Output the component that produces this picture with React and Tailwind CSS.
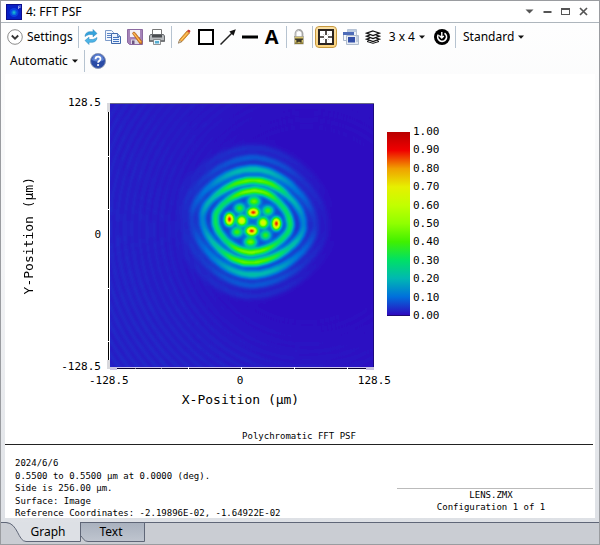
import React, { useState } from "react";

const SCALE = ["1.00", "0.90", "0.80", "0.70", "0.60", "0.50", "0.40", "0.30", "0.20", "0.10", "0.00"];

// rounded diamond through its top, right, bottom and left points
function ringPath([tx, ty], [rx, ry], [bx, by], [lx, ly]) {
  const k = 0.45;
  return [
    `M${tx} ${ty}`,
    `C${tx + k * (rx - tx)} ${ty} ${rx} ${ry - k * (ry - ty)} ${rx} ${ry}`,
    `C${rx} ${ry + k * (by - ry)} ${bx + k * (rx - bx)} ${by} ${bx} ${by}`,
    `C${bx - k * (bx - lx)} ${by} ${lx} ${ly + k * (by - ly)} ${lx} ${ly}`,
    `C${lx} ${ly - k * (ly - ty)} ${tx - k * (tx - lx)} ${ty} ${tx} ${ty}Z`,
  ].join(" ");
}

// peak: intensity at top and bottom, side: intensity at left and right
const RINGS = [
  { pts: [[466, 287], [571, 390], [450, 472], [345, 372]], peak: 0.6, mid: 0.33, side: 0.38, width: 15 },
  { pts: [[462, 256], [611, 390], [450, 503], [307, 368]], peak: 0.54, mid: 0.26, side: 0.13, width: 16 },
  { pts: [[460, 223], [645, 394], [455, 539], [275, 366]], peak: 0.22, mid: 0.1, side: 0.03, width: 19 },
  { pts: [[460, 188], [680, 394], [455, 571], [245, 366]], peak: 0.08, mid: 0.03, side: 0.01, width: 15 },
  { pts: [[460, 158], [710, 394], [455, 604], [215, 366]], peak: 0.035, mid: 0.012, side: 0, width: 13 },
];

const SPOTS = [
  [388, 373, 11, 18, 1],
  [529, 386, 11, 18, 1],
  [460, 352, 16, 11, 1],
  [455, 408, 16, 11, 1],
  [425, 377, 13, 13, 0.75],
  [490, 383, 13, 13, 0.75],
  [462, 319, 17, 12, 0.45],
  [452, 441, 17, 12, 0.45],
  [419, 340, 14, 12, 0.38],
  [504, 347, 14, 12, 0.4],
  [411, 411, 14, 12, 0.4],
  [497, 421, 14, 12, 0.38],
];

function PsfMap() {
  const ripples = Array.from({ length: 34 }, (_, i) => 260 + i * 22);
  return (
    <svg x="110" y="104" width="264" height="263" viewBox="30 27 792 789" preserveAspectRatio="none">
      <defs>
        {/* grey intensity in, false colour out */}
        <filter id="falseColour" filterUnits="userSpaceOnUse" x="0" y="0" width="860" height="850" colorInterpolationFilters="sRGB">
          <feGaussianBlur stdDeviation="6" />
          <feComponentTransfer>
            <feFuncR type="table" tableValues="0.18 0 0 0 0.25 0.56 0.76 0.9 0.94 0.94 0.72" />
            <feFuncG type="table" tableValues="0.05 0.44 0.72 0.88 0.94 1 1 0.94 0.62 0 0" />
            <feFuncB type="table" tableValues="0.76 0.86 0.7 0.4 0 0 0 0 0 0 0" />
          </feComponentTransfer>
        </filter>
        {RINGS.map((r, i) => (
          <linearGradient key={i} id={`ring${i}`} x1="0" y1="0" x2="0" y2="1">
            <stop offset="0" stopColor="#fff" stopOpacity={r.peak} />
            <stop offset="0.17" stopColor="#fff" stopOpacity={r.mid} />
            <stop offset="0.45" stopColor="#fff" stopOpacity={r.side} />
            <stop offset="0.55" stopColor="#fff" stopOpacity={r.side} />
            <stop offset="0.83" stopColor="#fff" stopOpacity={r.mid} />
            <stop offset="1" stopColor="#fff" stopOpacity={r.peak} />
          </linearGradient>
        ))}
        <linearGradient id="ripple" gradientUnits="userSpaceOnUse" x1="30" y1="500" x2="640" y2="250">
          <stop offset="0" stopColor="#fff" stopOpacity="0.045" />
          <stop offset="1" stopColor="#fff" stopOpacity="0.01" />
        </linearGradient>
        <radialGradient id="halo">
          <stop offset="0" stopColor="#fff" stopOpacity="0.1" />
          <stop offset="0.5" stopColor="#fff" stopOpacity="0.04" />
          <stop offset="1" stopColor="#fff" stopOpacity="0" />
        </radialGradient>
      </defs>
      <g filter="url(#falseColour)" fill="none">
        <rect x="-20" y="-20" width="900" height="900" fill="#000" />
        {ripples.map((r, i) => (
          <circle key={r} cx="620" cy="400" r={r} stroke="url(#ripple)" strokeOpacity={Math.min(1, (i + 1) / 9)} strokeWidth="11" />
        ))}
        <ellipse cx="458" cy="380" rx="240" ry="250" fill="url(#halo)" />
        {RINGS.map((r, i) => (
          <path key={i} d={ringPath(...r.pts)} stroke={`url(#ring${i})`} strokeWidth={r.width} />
        ))}
        {SPOTS.map(([cx, cy, rx, ry, v]) => (
          <ellipse key={`${cx}-${cy}`} cx={cx} cy={cy} rx={rx} ry={ry} fill="#fff" fillOpacity={v} />
        ))}
      </g>
    </svg>
  );
}

function Plot() {
  return (
    <svg className="block" width="269" height="267" viewBox="106 103 269 267" shapeRendering="crispEdges" role="img" aria-label="FFT PSF">
      <PsfMap />
      <path d="M109 103.5H374" stroke="#6a6a86" />
      <path d="M373.5 104V367" stroke="#1c0a80" />
      <path d="M108.5 104V368" stroke="#000" />
      <path d="M110 368.5H374" stroke="#0c0430" />
      <path d="M110 367.5H374" stroke="#cdc6ee" />
      <path d="M107 103h3v9h-3zM107 360h3v9h-3z" fill="#d8d8dc" />
      <path d="M110 367h7v3h-7zM366 367h8v3h-8z" fill="#c8c2e0" />
      <path d="M107 156.500h3M107 209.500h3M107 288.500h3M107 341.500h3M188.500 367v3M241.500 367v3M294.500 367v3M347.500 367v3" stroke="#fff" />
      <path d="M135.500 368v1M161.500 368v1" stroke="#777" />
    </svg>
  );
}

function Icon({ children }) {
  return (
    <svg width="16" height="16" viewBox="0 0 16 16" fill="none" className="block shrink-0">
      {children}
    </svg>
  );
}

function Tool({ label, children, active }) {
  return (
    <button
      type="button"
      aria-label={label}
      title={label}
      className={
        active
          ? "flex h-[22px] w-[22px] items-center justify-center rounded-sm border border-[#c7993f] bg-gradient-to-b from-[#f8dfa6] to-[#fbd27a]"
          : "flex h-[22px] items-center justify-center"
      }
    >
      {children}
    </button>
  );
}

function Caret() {
  return (
    <svg width="6" height="4" viewBox="0 0 6 4" className="block">
      <path d="M0 0.5h6L3 3.8z" fill="#111" />
    </svg>
  );
}

function Menu({ children }) {
  return (
    <button type="button" className="flex h-[22px] items-center gap-1 whitespace-nowrap">
      {children}
      <Caret />
    </button>
  );
}

function TitleBar() {
  return (
    <header className="flex h-[22px] shrink-0 items-center gap-1 border-b border-[#aeb6bd] bg-white px-[5px]">
      <Icon>
        <rect width="16" height="16" fill="#0b0c8e" />
        <rect x="1" y="1" width="14" height="14" fill="#0820c4" />
        <circle cx="8" cy="8.5" r="4.5" fill="#0a3ee0" />
        <circle cx="8" cy="8.5" r="2.6" fill="#0a78dc" />
        <circle cx="8" cy="8.5" r="1.2" fill="#19b3cf" />
        <path d="M12.5 5V2H15M12.5 3.500h2" stroke="#9fb0f5" strokeWidth="0.8" />
      </Icon>
      <h1 className="flex-1 text-[12px] leading-4">4: FFT PSF</h1>
      <div className="flex items-center gap-[9px] pr-1.5">
        <button type="button" aria-label="Window menu">
          <svg width="9" height="9" viewBox="0 0 9 9"><path d="M0.5 2.500h8L4.500 6.500z" fill="#555" /></svg>
        </button>
        <button type="button" aria-label="Minimize">
          <svg width="9" height="9" viewBox="0 0 9 9"><path d="M0.5 4h8v2h-8z" fill="#555" /></svg>
        </button>
        <button type="button" aria-label="Maximize">
          <svg width="9" height="9" viewBox="0 0 9 9"><path d="M0 1h9v7H0zM1 3v4h7V3z" fillRule="evenodd" fill="#555" /></svg>
        </button>
        <button type="button" aria-label="Close">
          <svg width="9" height="9" viewBox="0 0 9 9"><path d="M1 1l7 7M8 1L1 8" stroke="#555" strokeWidth="1.7" /></svg>
        </button>
      </div>
    </header>
  );
}

function Toolbar() {
  return (
    <div role="toolbar" className="flex shrink-0 flex-wrap items-center gap-y-0.5 px-1.5 pt-[3px] text-[12px] leading-4">
      <button type="button" className="flex h-[22px] items-center gap-1 pr-[5px]">
        <Icon>
          <circle cx="8" cy="8" r="7.3" fill="#fff" stroke="#8b8b8b" />
          <path d="M4.800 6.500L8 9.700l3.200-3.200" stroke="#333" strokeWidth="1.8" />
        </Icon>
        Settings
      </button>

      <div className="flex gap-1.5 border-l border-[#b6c3d0] pl-1 pr-1.5">
        <Tool label="Update">
          <Icon>
            <path d="M2 7.500C2.200 3.800 5 2.400 8 2.700h2V0.500l4 4-4 3.300V5.500H8C6 5.300 4.600 5.800 2 7.500z" fill="#35a3dc" stroke="#2280bb" strokeWidth="0.5" />
            <path d="M14 8.500c-.2 3.700-3 5.100-6 4.800H6v2.200l-4-4 4-3.300v2.300h2c2 .2 3.400-.3 6-2z" fill="#4db4e6" stroke="#2280bb" strokeWidth="0.5" />
          </Icon>
        </Tool>
        <Tool label="Copy">
          <Icon>
            <path d="M0.500 1.500h6l2 2v8h-8z" fill="#f3f7fd" stroke="#7d9bca" />
            <path d="M2 4.500h4M2 6.500h4M2 8.500h4" stroke="#5b84c4" />
            <path d="M6.500 4.500h6l3 3v7h-9z" fill="#eaf2fd" stroke="#3f68ab" />
            <path d="M12.500 4.500v3h3" fill="#a8c5ee" stroke="#3f68ab" strokeWidth="0.8" />
            <path d="M8 8.500h6M8 10.500h6M8 12.500h6" stroke="#4273bf" />
          </Icon>
        </Tool>
        <Tool label="Save">
          <Icon>
            <path d="M0.500 0.500h15v15h-13l-2-2z" fill="#a583b8" stroke="#8c6aa1" />
            <path d="M3 1h10v7H3z" fill="#f4f1f7" />
            <path d="M4 10.500h8V15H4z" fill="#ddd8e4" />
            <path d="M5 11.500h2.500V15H5z" fill="#6d5581" />
            <path d="M5.500 4.500l1-1.500 1.500.5 7 9-.5 2.500-2-.8z" fill="#e88b25" stroke="#9e5815" strokeWidth="0.6" />
            <path d="M6.500 4l7 9" stroke="#ffc468" />
          </Icon>
        </Tool>
        <Tool label="Print">
          <Icon>
            <path d="M3.500 0.500h9v6h-9z" fill="#fff" stroke="#777" />
            <path d="M1.500 5.500h13l1 1.500v5.500H.5V7z" fill="#b7babd" stroke="#66696c" />
            <path d="M3 6h10v2.500H3z" fill="#4a4d50" />
            <path d="M1 11h14v2H1z" fill="#77797c" />
            <path d="M4.500 10.500h7v5h-7z" fill="#e9f4fa" stroke="#777" strokeWidth="0.8" />
            <path d="M6 12h4v2.500H6z" fill="#58aed0" />
          </Icon>
        </Tool>
      </div>

      <div className="flex gap-1.5 border-l border-[#b6c3d0] pl-1 pr-1.5">
        <Tool label="Pencil">
          <Icon>
            <path d="M2.500 14l1.200-3.500L11 2l2.500 2L6 12.500z" fill="#f0a030" stroke="#a96a1e" strokeWidth="0.7" />
            <path d="M11 2l1-1.200c1-.6 2.800.6 2.300 1.800L13.500 4z" fill="#c93e35" />
            <path d="M2.300 14.300l1.300-3 1.900 1.400z" fill="#f2dcb5" stroke="#555" strokeWidth="0.4" />
            <path d="M4.700 11.600l7-8" stroke="#ffd27a" />
          </Icon>
        </Tool>
        <Tool label="Rectangle">
          <Icon><rect x="1" y="1" width="14" height="14" fill="#fff" stroke="#000" strokeWidth="2" /></Icon>
        </Tool>
        <Tool label="Arrow">
          <Icon>
            <path d="M0.500 15.500L12 4" stroke="#222" strokeWidth="1.5" />
            <path d="M15.800 0.200L13.500 6.800 9.300 2.600z" fill="#111" />
          </Icon>
        </Tool>
        <Tool label="Line">
          <Icon><rect y="6.5" width="16" height="3" fill="#000" /></Icon>
        </Tool>
        <Tool label="Text">
          <span className="w-4 text-center font-['Open_Sans',sans-serif] text-[20px] font-bold leading-5">A</span>
        </Tool>
      </div>

      <div className="flex border-l border-[#b6c3d0] pl-1 pr-[5px]">
        <Tool label="Lock">
          <Icon>
            <path d="M4.500 8V4.500a3.500 3.500 0 0 1 7 0V8" stroke="#a6a6a6" strokeWidth="1.8" />
            <path d="M5 8V4.500a3 3 0 0 1 3-3" stroke="#e4e4e4" strokeWidth="0.7" />
            <rect x="3.5" y="7.5" width="9" height="7.5" fill="#d9c56d" stroke="#999" strokeWidth="0.6" />
            <path d="M4 9.500h8v1l-2 1.500 2 1.500h-3L8 12.500 7 13.500H4l2-1.500-2-1.500z" fill="#3a3627" />
            <path d="M4 14.500h8" stroke="#8d7b35" />
          </Icon>
        </Tool>
      </div>

      <div className="flex items-center gap-1.5 border-l border-[#b6c3d0] pl-0.5 pr-[5px]">
        <Tool label="Fit window" active>
          <Icon>
            <rect x="1" y="1" width="14" height="14" fill="#fff" stroke="#2b2420" strokeWidth="2" />
            <path d="M8 2v4M8 10v4M2 8h4M10 8h4" stroke="#2b2420" strokeWidth="1.6" />
            <path d="M5 5l1.500 1.500M11 5L9.500 6.500M5 11l1.500-1.500M11 11L9.500 9.500" stroke="#b9b2aa" strokeWidth="0.7" />
          </Icon>
        </Tool>
        <Tool label="Windows">
          <Icon>
            <path d="M4.500 0.500h9v8h-9z" fill="#edf2f8" stroke="#b7c4d6" />
            <path d="M5 1h8v2H5z" fill="#bccbe0" />
            <path d="M0.500 3.500h10v8H.5z" fill="#f4f7fb" stroke="#a9b6cb" />
            <path d="M0 3h11v3H0z" fill="#4d6bb8" />
            <path d="M3.500 6.500h12v9h-12z" fill="#e8edf4" stroke="#b0bccd" />
            <path d="M5 8h7v5.500H5z" fill="#3450a8" />
            <path d="M13 8h2M13 10h2M13 12h2" stroke="#9badc7" />
          </Icon>
        </Tool>
        <Tool label="Overlay">
          <Icon>
            <path d="M8 2l6.500 2.200L8 6.500 1.500 4.200z" fill="#fff" stroke="#111" strokeWidth="1.3" />
            <path d="M5 6L1.500 7.200 8 9.500l6.500-2.300L11 6" stroke="#111" strokeWidth="1.3" />
            <path d="M5 9l-3.500 1.200L8 12.500l6.500-2.300L11 9" stroke="#111" strokeWidth="1.3" />
            <path d="M4 11.500l-2 1L8 14.300l6-1.800-2-1" stroke="#111" />
          </Icon>
        </Tool>
        <div className="pl-0.5"><Menu>3 x 4</Menu></div>
        <div className="pl-[3px]">
          <Tool label="Reset">
            <Icon>
              <circle cx="8" cy="8" r="8" fill="#000" />
              <path d="M10.500 4.200A4.400 4.400 0 1 1 4.300 5.700" stroke="#fff" strokeWidth="1.7" />
              <path d="M7.800 3v5.500M5.300 6.500l2.500 2.500 2-2" stroke="#fff" strokeWidth="1.4" />
            </Icon>
          </Tool>
        </div>
      </div>

      <div className="flex border-l border-[#b6c3d0] pl-[7px] pr-1.5">
        <Menu>Standard</Menu>
      </div>
      <div className="flex pl-[3px] pr-1.5">
        <Menu>Automatic</Menu>
      </div>
      <div className="flex border-l border-[#b6c3d0] px-[5px]">
        <Tool label="Help">
          <Icon>
            <circle cx="8" cy="8" r="7.5" fill="#2a4ba6" stroke="#8e9ab5" />
            <path d="M2 7a6 6 0 0 1 12 0c-3 2-8 2-12 0z" fill="#5b7fd0" />
            <path d="M5.500 6.200C5.500 2.800 10.700 3 10.500 6c-.1 1.700-2.400 1.800-2.400 3.700" stroke="#fff" strokeWidth="1.8" />
            <circle cx="8.1" cy="12" r="1.1" fill="#fff" />
          </Icon>
        </Tool>
      </div>
    </div>
  );
}

function Chart() {
  return (
    <div className="flex pl-4 pt-[22px] text-[11px] leading-[14px]">
      <div className="flex h-[280px] w-4 items-center justify-center">
        <span className="rotate-180 whitespace-nowrap text-[13px] leading-4 [writing-mode:vertical-rl]">Y-Position (µm)</span>
      </div>
      <div className="flex h-[278px] w-16 flex-col justify-between text-right">
        <span>128.5</span>
        <span>0</span>
        <span>-128.5</span>
      </div>
      <div className="pl-[5px] pt-[7px]">
        <Plot />
        <div className="-ml-[17px] -mr-4 mt-1 grid grid-cols-3">
          <span>-128.5</span>
          <span className="text-center">0</span>
          <span className="text-right">128.5</span>
        </div>
        <p className="mt-1 text-center text-[13px] leading-4">X-Position (µm)</p>
      </div>
      <div className="flex items-start gap-[3px] pl-3 pt-[29px]">
        <div className="mt-[7px] h-[184px] w-[23px] border-b border-[#1d0a70] bg-[linear-gradient(to_bottom,#b80000,#f00000_10%,#f0a000_20%,#e6f000_30%,#c2ff00_40%,#90ff00_50%,#40f000_60%,#00e066_70%,#00b8b2_80%,#0070dc_90%,#2e0abf)]" />
        <ul className="flex h-[198px] flex-col justify-between">
          {SCALE.map((v) => (
            <li key={v}>{v}</li>
          ))}
        </ul>
      </div>
    </div>
  );
}

function Footer() {
  return (
    <div className="pr-0.5 text-[9px] leading-3">
      <p className="border-b border-[#222] pb-0.5 text-center">Polychromatic FFT PSF</p>
      <div className="flex justify-between pt-3">
        <div className="flex h-[62px] flex-col justify-between whitespace-nowrap pl-2.5">
          <p>2024/6/6</p>
          <p>0.5500 to 0.5500 µm at 0.0000 (deg).</p>
          <p>Side is 256.00 µm.</p>
          <p>Surface: Image</p>
          <p>Reference Coordinates: -2.19896E-02, -1.64922E-02</p>
        </div>
        <div className="mt-[31px] w-1/3 self-start border-t border-[#bbb] pr-2 text-center">
          <p>LENS.ZMX</p>
          <p>Configuration 1 of 1</p>
        </div>
      </div>
    </div>
  );
}

function Tabs({ tab, setTab }) {
  return (
    <div role="tablist" className="flex h-[22px] shrink-0 items-start border-t border-[#5f6677] bg-[#cacdd3] text-[12px] leading-4">
      <button type="button" role="tab" aria-selected={tab === "graph"} onClick={() => setTab("graph")} className="relative h-[18px] w-20 pl-[14px]">
        <svg className="absolute left-0 -top-px" width="80" height="20" viewBox="0 0 80 20">
          <path d="M0 0H79.500V19.500H25C17 19.500 17 1 5 .5H0" fill="#dde0e5" />
          <path d="M0 .5H5C17 1 17 19.500 25 19.500H79.500V0" fill="none" stroke="#5f6677" />
        </svg>
        <span className="relative">Graph</span>
      </button>
      <button type="button" role="tab" aria-selected={tab === "text"} onClick={() => setTab("text")} className="relative h-[18px] w-16 pr-1">
        <svg className="absolute left-0 -top-px" width="64" height="20" viewBox="0 0 64 20">
          <defs>
            <linearGradient id="tabFill" x1="0" y1="0" x2="0" y2="1">
              <stop offset="0" stopColor="#a9b1be" />
              <stop offset="1" stopColor="#bfc5cf" />
            </linearGradient>
          </defs>
          <path d="M0 .5H63.500V19.500H7C3 19.500 2 16 0 14" fill="url(#tabFill)" stroke="#5f6677" />
        </svg>
        <span className="relative">Text</span>
      </button>
    </div>
  );
}

export default function App() {
  const [tab, setTab] = useState("graph");

  return (
    <div className="flex h-screen flex-col border border-[#9a9ca0] bg-gradient-to-b from-white via-[#f3f4f6] to-[#dcdfe4] font-['Noto_Sans',sans-serif] text-black">
      <TitleBar />
      <Toolbar />
      <main className="mx-1 mb-1 mt-0.5 flex min-h-0 flex-1 flex-col overflow-hidden bg-white font-['DejaVu_Sans_Mono',monospace]">
        <Chart />
        <div className="mt-[22px]">
          <Footer />
        </div>
      </main>
      <Tabs tab={tab} setTab={setTab} />
    </div>
  );
}
